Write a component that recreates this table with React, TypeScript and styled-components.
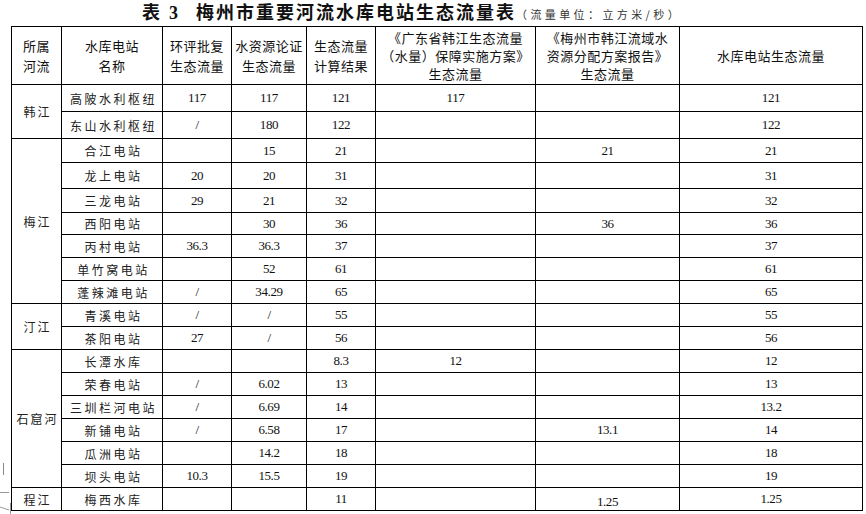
import styled, { createGlobalStyle } from 'styled-components';

const GlobalStyle = createGlobalStyle`
    html, body {
        margin: 0;
        padding: 0;
        background: #ffffff;
    }
`

const Page = styled.div`
    position: relative;
    width: 866px;
    height: 514px;
    box-sizing: border-box;
    padding-left: 11px;
    background: #ffffff;
    overflow: hidden;
`

const Title = styled.div`
    display: flex;
    align-items: baseline;
    height: 26px;
    padding-left: 131px;
    line-height: 26px;
    color: #111;
    white-space: nowrap;
`

const TitleMain = styled.span<{ $gap?: number }>`
    font-family: "Liberation Serif", "Noto Sans CJK SC", serif;
    font-size: 18px;
    font-weight: 700;
    letter-spacing: 2px;
    margin-right: ${p => p.$gap ?? 0}px;
`

const TitleNo = styled.span`
    font-family: "Liberation Serif", "Noto Sans CJK SC", serif;
    font-size: 18px;
    font-weight: 700;
    margin-right: 18px;
`

const TitleNote = styled.span`
    font-family: "Noto Sans CJK SC", sans-serif;
    font-size: 11px;
    letter-spacing: 3.4px;
    color: #333;
`

const Sheet = styled.table`
    border-collapse: collapse;
    table-layout: fixed;
    width: 851px;
`

const Head = styled.th<{ $tight?: boolean }>`
    border: 1px solid #000;
    padding: 0;
    height: 57px;
    font-family: "Noto Sans CJK SC", sans-serif;
    font-size: 13px;
    font-weight: 400;
    letter-spacing: 0.5px;
    line-height: ${p => (p.$tight ? '18px' : '20px')};
    color: #111;
    text-align: center;
    vertical-align: middle;
`

const Row = styled.tr<{ $h: number }>`
    height: ${p => p.$h}px;
`

const RiverCell = styled.td`
    border: 1px solid #000;
    padding: 0 0 0 2px;
    font-family: "Noto Sans CJK SC", sans-serif;
    font-size: 12px;
    letter-spacing: 2px;
    color: #222;
    text-align: center;
    vertical-align: middle;
`

const NameCell = styled.td`
    border: 1px solid #000;
    padding: 0 0 0 3px;
    font-family: "Noto Sans CJK SC", sans-serif;
    font-size: 12px;
    letter-spacing: 2.5px;
    color: #222;
    text-align: center;
    vertical-align: middle;
    white-space: nowrap;
`

const NumCell = styled.td<{ $low?: boolean }>`
    border: 1px solid #000;
    padding: ${p => (p.$low ? '5px 0 0' : '0')};
    font-family: "Liberation Serif", serif;
    font-size: 13px;
    letter-spacing: -0.4px;
    color: #111;
    text-align: center;
    vertical-align: middle;
    line-height: 14px;
`

const Marks = styled.svg`
    position: absolute;
    left: 0;
    top: 455px;
`

type Station = {
    river?: string
    span?: number
    name: string
    h: number
    v: string[]
    low?: boolean
}

const stations: Station[] = [
    { river: '韩江', span: 2, name: '高陂水利枢纽', h: 27, v: ['117', '117', '121', '117', '', '121'] },
    { name: '东山水利枢纽', h: 27, v: ['/', '180', '122', '', '', '122'] },
    { river: '梅江', span: 7, name: '合江电站', h: 24, v: ['', '15', '21', '', '21', '21'] },
    { name: '龙上电站', h: 26, v: ['20', '20', '31', '', '', '31'] },
    { name: '三龙电站', h: 24, v: ['29', '21', '32', '', '', '32'] },
    { name: '西阳电站', h: 22, v: ['', '30', '36', '', '36', '36'] },
    { name: '丙村电站', h: 23, v: ['36.3', '36.3', '37', '', '', '37'] },
    { name: '单竹窝电站', h: 23, v: ['', '52', '61', '', '', '61'] },
    { name: '蓬辣滩电站', h: 23, v: ['/', '34.29', '65', '', '', '65'] },
    { river: '汀江', span: 2, name: '青溪电站', h: 23, v: ['/', '/', '55', '', '', '55'] },
    { name: '茶阳电站', h: 23, v: ['27', '/', '56', '', '', '56'] },
    { river: '石窟河', span: 6, name: '长潭水库', h: 23, v: ['', '', '8.3', '12', '', '12'] },
    { name: '荣春电站', h: 23, v: ['/', '6.02', '13', '', '', '13'] },
    { name: '三圳栏河电站', h: 23, v: ['/', '6.69', '14', '', '', '13.2'] },
    { name: '新铺电站', h: 23, v: ['/', '6.58', '17', '', '13.1', '14'] },
    { name: '瓜洲电站', h: 23, v: ['', '14.2', '18', '', '', '18'] },
    { name: '坝头电站', h: 23, v: ['10.3', '15.5', '19', '', '', '19'] },
    { river: '程江', span: 1, name: '梅西水库', h: 23, v: ['', '', '11', '', '1.25', '1.25'], low: true },
]

const widths = [50, 101, 69, 75, 69, 160, 144, 183]

const App = () => (
    <Page>
        <GlobalStyle />
        <Title>
            <TitleMain $gap={7}>表</TitleMain>
            <TitleNo>3</TitleNo>
            <TitleMain>梅州市重要河流水库电站生态流量表</TitleMain>
            <TitleNote>（流量单位：立方米/秒）</TitleNote>
        </Title>
        <Sheet>
            <colgroup>
                {widths.map((w, i) => <col key={i} style={{ width: w }} />)}
            </colgroup>
            <thead>
                <tr>
                    <Head>所属<br />河流</Head>
                    <Head>水库电站<br />名称</Head>
                    <Head>环评批复<br />生态流量</Head>
                    <Head>水资源论证<br />生态流量</Head>
                    <Head>生态流量<br />计算结果</Head>
                    <Head $tight>《广东省韩江生态流量<br />（水量）保障实施方案》<br />生态流量</Head>
                    <Head $tight>《梅州市韩江流域水<br />资源分配方案报告》<br />生态流量</Head>
                    <Head>水库电站生态流量</Head>
                </tr>
            </thead>
            <tbody>
                {stations.map(s => (
                    <Row key={s.name} $h={s.h}>
                        {s.river && <RiverCell rowSpan={s.span}>{s.river}</RiverCell>}
                        <NameCell>{s.name}</NameCell>
                        {s.v.map((val, i) => (
                            <NumCell key={i} $low={s.low && i === 4}>{val}</NumCell>
                        ))}
                    </Row>
                ))}
            </tbody>
        </Sheet>
        <Marks width="14" height="59" viewBox="0 0 14 59">
            <line x1="3.5" y1="8" x2="3.5" y2="20" stroke="#888" strokeWidth="1" />
            <line x1="0" y1="37.5" x2="9" y2="37.5" stroke="#999" strokeWidth="1" />
            <line x1="0" y1="52" x2="9" y2="55" stroke="#999" strokeWidth="1" />
            <line x1="10.5" y1="48" x2="10.5" y2="59" stroke="#999" strokeWidth="1" />
        </Marks>
    </Page>
)

export default App
